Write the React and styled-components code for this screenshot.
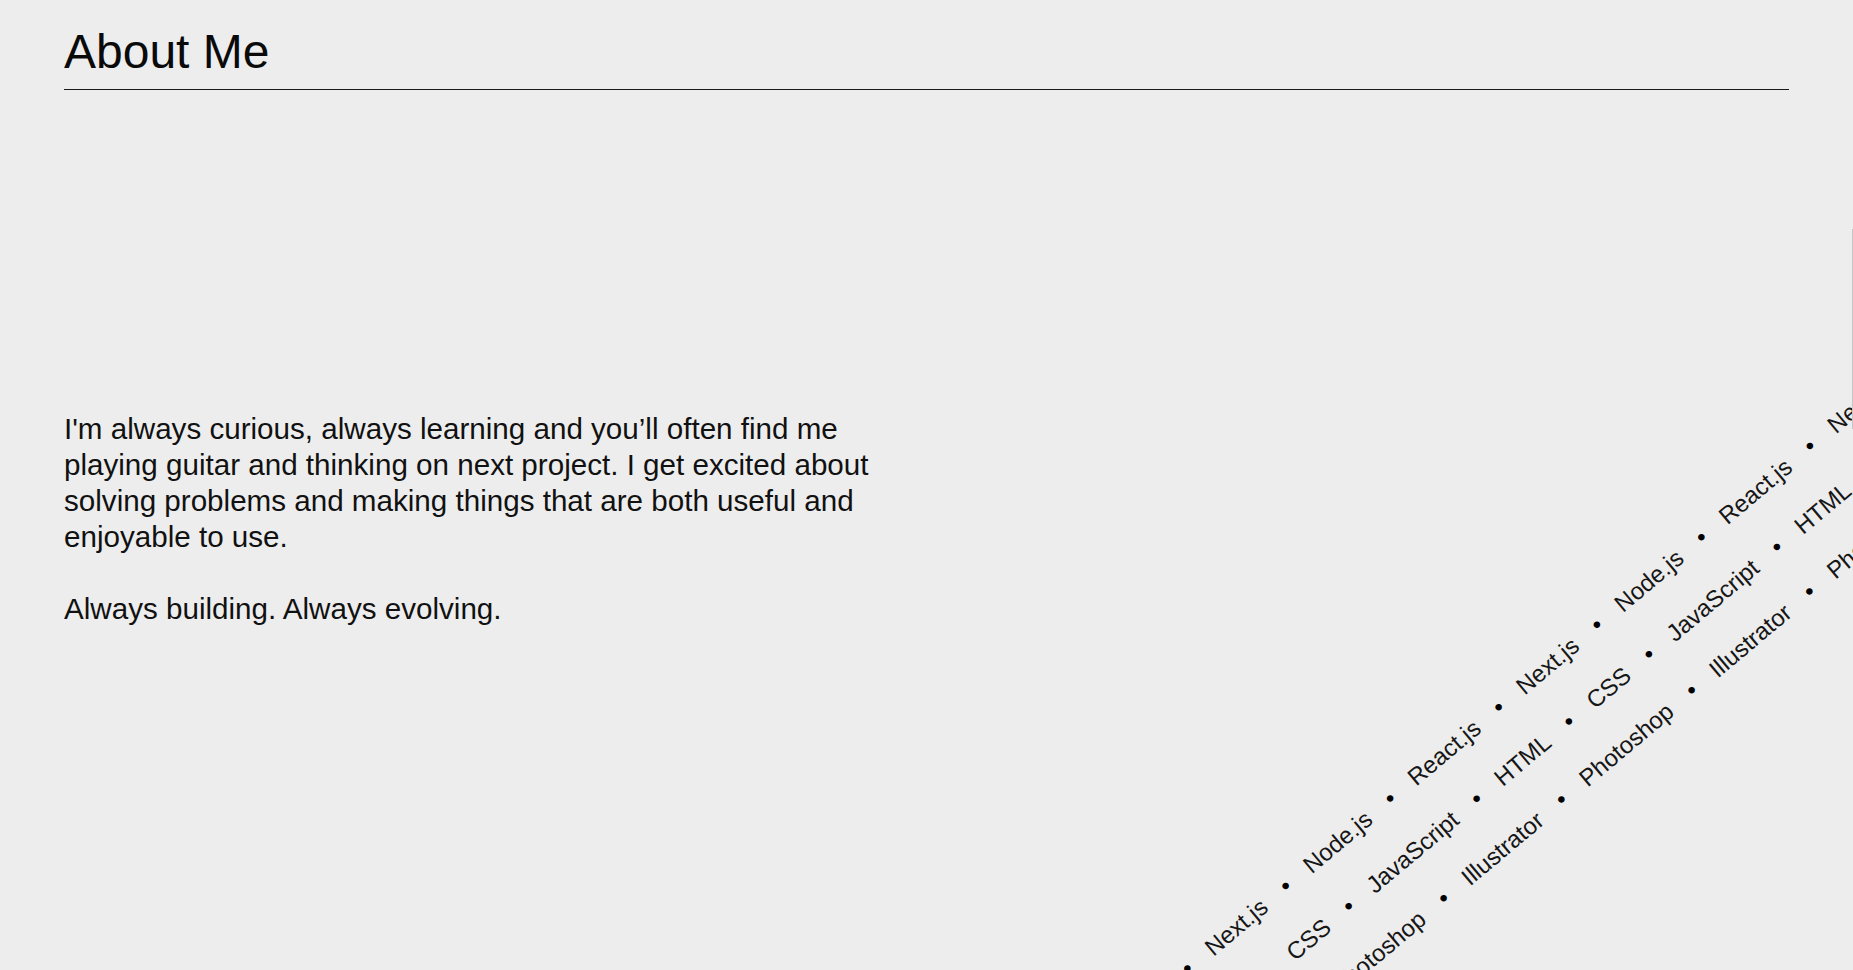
import React from 'react';
import styled, { createGlobalStyle } from 'styled-components';

const GlobalStyle = createGlobalStyle`
  html,
  body {
    margin: 0;
    padding: 0;
    overflow: hidden;
    background: #ededed;
  }

  * {
    box-sizing: border-box;
  }
`;

const font = `"Liberation Sans", Arial, sans-serif`;

const StyledSection = styled.section`
  position: relative;
  height: 100vh;
  padding: 24px 64px 0;
  overflow: hidden;
  background: #ededed;
  color: #111;
  font-family: ${font};
`;

const StyledTitle = styled.h2`
  margin: 0;
  padding-bottom: 9px;
  border-bottom: 1px solid #1a1a1a;
  font-size: 48px;
  line-height: 56px;
  font-weight: 400;
  color: #0a0a0a;
`;

const StyledBody = styled.div`
  display: grid;
  grid-template-columns: minmax(0, 1fr) minmax(0, 1fr);
  column-gap: 64px;
  margin-top: 321px;
`;

const StyledText = styled.div`
  min-width: 0;
`;

const StyledParagraph = styled.p`
  margin: 0 0 36px;
  font-size: 29.6px;
  line-height: 36px;
`;

const StyledSkillsColumn = styled.div`
  min-width: 0;
`;

// the rotated ticker band, origin at its top-left corner
const StyledBand = styled.div`
  display: flex;
  flex-direction: column;
  gap: 23.5px;
  width: max-content;
  transform-origin: 0 0;
  transform: translate(86.4px, 655.6px) rotate(-40deg);
`;

const StyledRow = styled.div`
  display: flex;
  align-items: center;
  gap: 23.3px;
  margin-left: ${({ $shift }) => $shift}px;
  white-space: nowrap;
  font-size: 24px;
  line-height: 32px;
`;

const StyledSkill = styled.span`
  color: #161616;
`;

const StyledDot = styled.span`
  color: #000;
`;

const StyledEdge = styled.div`
  position: absolute;
  top: 229px;
  right: 0;
  width: 1px;
  height: 200px;
  background: #c6c6c6;
`;

const rows = [
  { items: ['React.js', 'Next.js', 'Node.js'], shift: 57.5 },
  { items: ['HTML', 'CSS', 'JavaScript'], shift: 138.3 },
  { items: ['Illustrator', 'Photoshop'], shift: 117.4 },
];

const repeat = (items, count) => {
  const out = [];
  while (out.length < count) out.push(...items);
  return out;
};

const SkillRow = ({ items, shift }) => (
  <StyledRow $shift={shift}>
    {repeat(items, 15).map((name, i) => (
      <React.Fragment key={i}>
        <StyledSkill>{name}</StyledSkill>
        <StyledDot>•</StyledDot>
      </React.Fragment>
    ))}
  </StyledRow>
);

const App = () => {
  return (
    <>
      <GlobalStyle />
      <StyledSection>
        <StyledTitle>About Me</StyledTitle>
        <StyledBody>
          <StyledText>
            <StyledParagraph>
              I'm always curious, always learning and you’ll often find me
              playing guitar and thinking on next project. I get excited about
              solving problems and making things that are both useful and
              enjoyable to use.
            </StyledParagraph>
            <StyledParagraph>Always building. Always evolving.</StyledParagraph>
          </StyledText>
          <StyledSkillsColumn>
            <StyledBand>
              {rows.map((row, i) => (
                <SkillRow key={i} items={row.items} shift={row.shift} />
              ))}
            </StyledBand>
          </StyledSkillsColumn>
        </StyledBody>
        <StyledEdge />
      </StyledSection>
    </>
  );
};

export default App;
